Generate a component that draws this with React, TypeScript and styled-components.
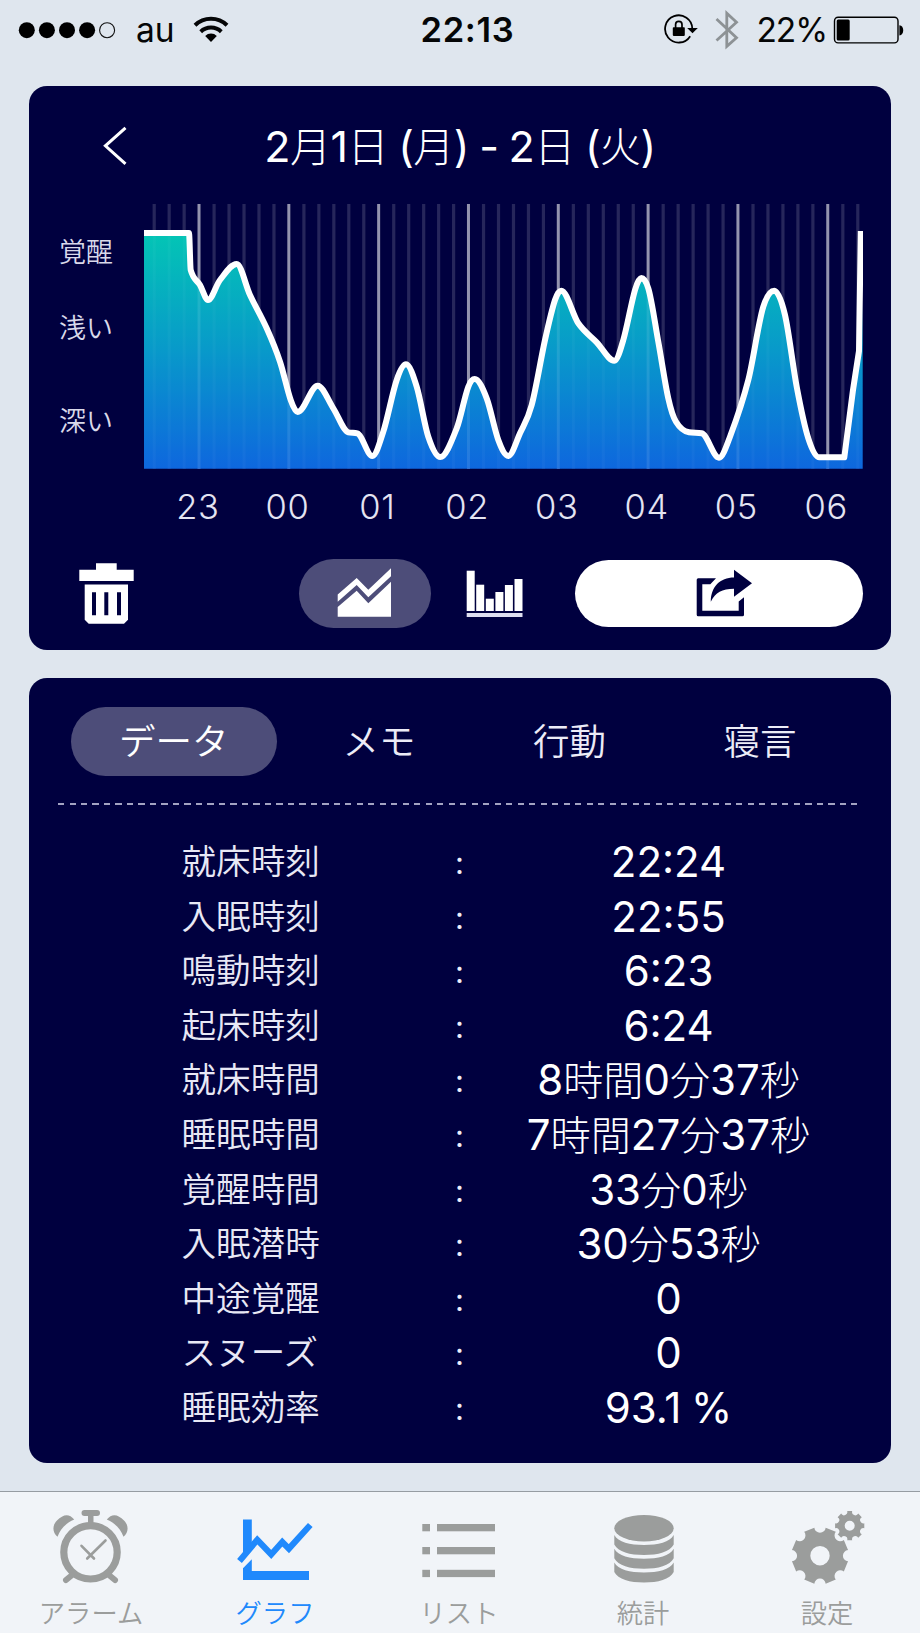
import React from 'react';
import styled, { createGlobalStyle } from 'styled-components';

const NAVY = '#00003f';
const PILL = '#4d4d79';
const GREY = '#9b9d9c';
const BLUE = '#2089fc';

const GlobalStyle = createGlobalStyle`
  *, *::before, *::after { box-sizing: border-box; }
  body {
    margin: 0;
    background: #dfe6ee;
    font-family: Inter, "Noto Sans CJK JP", sans-serif;
    font-weight: 350;
  }
  button { font: inherit; color: inherit; border: 0; padding: 0; background: none; }
  svg { display: block; flex: none; }
`;

const Screen = styled.div`
  width: 920px;
  height: 1633px;
  display: flex;
  flex-direction: column;
  overflow: hidden;
`;

/* ---------- status bar ---------- */

const StatusBar = styled.header`
  height: 58px;
  flex: none;
  display: grid;
  grid-template-columns: 1fr auto 1fr;
  align-items: center;
  padding: 0 15px 0 18px;
  color: #050607;
  font-size: 33.5px;
  font-weight: 400;
  line-height: 58px;
`;

const StatusGroup = styled.div<{ $end?: boolean }>`
  display: flex;
  align-items: center;
  justify-content: ${p => (p.$end ? 'flex-end' : 'flex-start')};
`;

const Carrier = styled.span`
  width: 57px;
  margin-left: 20px;
  padding-top: 1px;
`;

const Clock = styled.span`
  font-weight: 600;
  font-size: 34.5px;
  letter-spacing: 0.7px;
  margin-left: 12px;
  padding-top: 1px;
`;

const Percent = styled.span`
  margin: 0 6px 0 18px;
  padding-top: 1px;
  letter-spacing: -1.1px;
`;

/* ---------- cards ---------- */

const Card = styled.section<{ $height: number; $gap: number }>`
  flex: none;
  height: ${p => p.$height}px;
  margin: ${p => p.$gap}px 29px 0;
  border-radius: 18px;
  background: ${NAVY};
  color: #fff;
  display: flex;
  flex-direction: column;
`;

const CardHeader = styled.div`
  height: 117.5px;
  flex: none;
  display: grid;
  grid-template-columns: 1fr auto 1fr;
  align-items: center;
  padding: 1px 74px 0;
`;

const Title = styled.h1`
  margin: 0;
  padding-top: 2px;
  font-size: 43px;
  line-height: 60px;
  font-weight: 300;
  white-space: nowrap;
  letter-spacing: -0.5px;
  word-spacing: -1.5px;
`;

const ChartRow = styled.div`
  display: flex;
  padding-left: 30px;
`;

const DepthLabels = styled.div`
  width: 85px;
  padding-top: 34px;
  font-size: 27px;
  line-height: 30px;
  color: #d9d9ea;
`;

const DepthLabel = styled.div<{ $gap?: number }>`
  margin-top: ${p => p.$gap ?? 0}px;
`;

const Hours = styled.div`
  display: grid;
  grid-template-columns: repeat(8, 89.75px);
  margin-left: 124px;
  margin-top: 16px;
  height: 44px;
  font-size: 34.5px;
  line-height: 44px;
  letter-spacing: 0.7px;
  text-align: center;
  color: #e4e4f2;
`;

const Toolbar = styled.div`
  display: flex;
  align-items: center;
  height: 69px;
  margin-top: 30px;
  padding-left: 50px;
`;

const ModeButton = styled.button<{ $active?: boolean; $shift?: number }>`
  width: 132px;
  height: 69px;
  border-radius: 35px;
  display: flex;
  align-items: center;
  justify-content: center;
  padding-right: ${p => p.$shift ?? 0}px;
  background: ${p => (p.$active ? PILL : 'transparent')};
`;

const ModeSwitch = styled.div`
  display: flex;
  margin-left: 165px;
`;

const ShareButton = styled.button`
  width: 288px;
  height: 67px;
  margin-left: 12px;
  border-radius: 34px;
  background: #fff;
  display: flex;
  align-items: center;
  justify-content: center;
  padding-left: 11px;
`;

const Tabs = styled.nav`
  display: flex;
  height: 69px;
  margin: 28.5px 0 0 41.5px;
`;

const TabButton = styled.button<{ $active?: boolean; $width: number }>`
  width: ${p => p.$width}px;
  border-radius: 35px;
  font-size: 36.5px;
  line-height: 66px;
  padding-top: 2px;
  color: ${p => (p.$active ? '#fff' : '#ececf7')};
  background: ${p => (p.$active ? PILL : 'transparent')};
`;

const Divider = styled.div`
  height: 1.5px;
  flex: none;
  margin: 27.5px 34px 0 28.5px;
  background: repeating-linear-gradient(90deg, #a3a3c2 0 6px, transparent 6px 11.5px);
`;

const Records = styled.dl`
  margin: 28px 0 0;
  padding-left: 152.5px;
`;

const Record = styled.div`
  display: grid;
  grid-template-columns: 258px 40px 300px;
  height: 54.6px;
  line-height: 54.6px;
`;

const RecordName = styled.dt`
  padding-top: 1px;
  font-size: 34.6px;
  color: #e8e8f5;
`;

const Colon = styled.span`
  font-size: 31px;
  font-weight: 400;
  padding-top: 3px;
  text-align: center;
  color: #eeeef8;
`;

const RecordValue = styled.dd`
  margin: 0 -79px 0 39px;
  padding-top: 2px;
  width: 300px;
  font-size: 42px;
  font-weight: 300;
  text-align: center;
  white-space: nowrap;
  word-spacing: -2px;
`;

const Figure = styled.span`
  font-weight: 400;
`;

const Kanji = styled.span`
  font-size: 0.955em;
`;

// Figures are set a little heavier and larger than the characters between them.
const MixedText = ({ children }: { children: string }) => (
  <>
    {(children.match(/[\x20-\x7e]+|[^\x20-\x7e]+/g) ?? []).map((run, i) =>
      run.charCodeAt(0) < 128 ? <Figure key={i}>{run}</Figure> : <Kanji key={i}>{run}</Kanji>,
    )}
  </>
);

/* ---------- bottom navigation ---------- */

const BottomNav = styled.nav`
  height: 142px;
  flex: none;
  margin-top: auto;
  display: grid;
  grid-template-columns: repeat(5, 1fr);
  border-top: 1px solid #969ca2;
  background: #f1f4f8;
`;

const NavItem = styled.button<{ $active?: boolean }>`
  display: flex;
  flex-direction: column;
  color: ${p => (p.$active ? BLUE : GREY)};
`;

const NavLabel = styled.span`
  width: 182px;
  margin-top: 11.5px;
  font-size: 26.3px;
  line-height: 36px;
  text-align: center;
`;

/* ---------- sleep chart ---------- */

const DEPTH: [number, number][] = [
  [0, 29], [45, 29], [46.7, 66], [56, 81], [64, 96], [76, 76], [92.7, 60], [106, 91],
  [122.7, 124.3], [136, 157.7], [146.7, 196], [153.7, 208], [173.7, 181.7], [189.3, 204.3],
  [204.3, 228.3], [213.3, 229.3], [228.3, 252], [239.3, 227.7], [252.7, 176], [262, 160.3],
  [272.7, 182.7], [284.3, 232.7], [296.3, 253], [312.7, 224.3], [324.3, 182.7], [330.7, 175],
  [342.7, 194.3], [354.3, 236], [364.3, 252], [376, 229.3], [387.7, 201], [401, 136],
  [411, 96], [417.3, 86.7], [434.3, 119.3], [452.7, 138.3], [470.3, 156.7], [479.3, 136],
  [491, 86], [497.3, 74], [504.3, 84.3], [514.3, 137.7], [524.3, 194.3], [532, 217.7],
  [545, 228.3], [557.7, 229.3], [575, 253.7], [586, 232.7], [604.3, 176], [619.3, 102.7],
  [630.3, 86.7], [641, 111], [652.7, 182.7], [664.3, 234.3], [675.3, 253.3], [700.3, 253.3],
];

// Monotone cubic interpolation keeps peaks and valleys at the sampled points.
function smoothPath(pts: [number, number][]): string {
  const n = pts.length;
  const slope = pts.slice(1).map(([x, y], i) => (y - pts[i][1]) / (x - pts[i][0]));
  const tangent = pts.map((_, i) => {
    if (i === 0) return slope[0];
    if (i === n - 1) return slope[n - 2];
    const a = slope[i - 1];
    const b = slope[i];
    if (a * b <= 0) return 0;
    const mean = (pts[i + 1][1] - pts[i - 1][1]) / (pts[i + 1][0] - pts[i - 1][0]);
    return Math.sign(a) * Math.min(Math.abs(mean), 2.2 * Math.abs(a), 2.2 * Math.abs(b));
  });
  let d = `M${pts[0][0]} ${pts[0][1]}`;
  for (let i = 0; i < n - 1; i++) {
    const [x0, y0] = pts[i];
    const [x1, y1] = pts[i + 1];
    const h = (x1 - x0) / 3;
    d += `C${x0 + h} ${y0 + tangent[i] * h} ${x1 - h} ${y1 - tangent[i + 1] * h} ${x1} ${y1}`;
  }
  return d;
}

const CURVE = `${smoothPath(DEPTH)}L709 186L715 147L716.8 27`;
const AREA = `${CURVE}L718.7 140V264.7H0Z`;

const Grid = ({ minor, major }: { minor: number; major: number }) => (
  <g fill="#fff">
    {Array.from({ length: 48 }, (_, i) => {
      const isHour = i % 6 === 3;
      return (
        <rect
          key={i}
          x={8.6 + i * 14.97}
          y={0}
          width={isHour ? 3 : 3.2}
          height={264.7}
          opacity={isHour ? major : minor}
        />
      );
    })}
  </g>
);

const SleepChart = () => (
  <svg width="719" height="265" viewBox="0 0 719 265">
    <defs>
      <linearGradient id="sleep" gradientUnits="userSpaceOnUse" x1="0" y1="29" x2="0" y2="265">
        <stop offset="0" stopColor="#03c5b5" />
        <stop offset="0.5" stopColor="#0899ca" />
        <stop offset="1" stopColor="#0e67de" />
      </linearGradient>
      <clipPath id="area"><path d={AREA} /></clipPath>
    </defs>
    <Grid minor={0.15} major={0.58} />
    <path d={AREA} fill="url(#sleep)" />
    <g clipPath="url(#area)"><Grid minor={0.03} major={0.1} /></g>
    <path d={CURVE} fill="none" stroke="#fff" strokeWidth="6" strokeLinejoin="round" />
  </svg>
);

/* ---------- icons ---------- */

const SignalIcon = () => (
  <svg width="98" height="18" viewBox="0 0 98 18">
    {[8.8, 28.9, 49, 69.1].map(x => <circle key={x} cx={x} cy="9.2" r="8" fill="#000" />)}
    <circle cx="89.1" cy="9.2" r="7.5" fill="none" stroke="#111" strokeWidth="1.1" />
  </svg>
);

const WifiIcon = () => (
  <svg width="36" height="28" viewBox="0 0 36 28">
    <g fill="none" stroke="#050607" strokeWidth="4">
      <path d="M2 9.2A23 23 0 0 1 34 9.2" />
      <path d="M7.7 15.7A15 15 0 0 1 28.3 15.7" />
    </g>
    <path d="M12.2 19.9A8.5 8.5 0 0 1 23.8 19.9L18 26.1Z" />
  </svg>
);

const RotationLockIcon = () => (
  <svg width="36" height="32" viewBox="0 0 36 32">
    <path d="M28.3 14.7A13.6 13.6 0 1 0 26.2 22.2" fill="none" stroke="#000" strokeWidth="1.8" />
    <path d="M23.2 14H33.8L28.5 19.2Z" />
    <rect x="8.8" y="13.3" width="12" height="8.6" rx="0.8" />
    <path d="M11.6 14V10.5a3.2 3.2 0 0 1 6.4 0V14" fill="none" stroke="#000" strokeWidth="1.7" />
  </svg>
);

const BluetoothIcon = () => (
  <svg width="24" height="40" viewBox="0 0 24 40">
    <path d="M1.5 9L21.5 27.8L11.8 36.3V3.3L21.5 12.2L1.5 30.5" fill="none" stroke="#8d9295" strokeWidth="2.8" />
  </svg>
);

const BatteryIcon = () => (
  <svg width="72" height="28" viewBox="0 0 72 28">
    <rect x="1.5" y="1.3" width="63.5" height="25.6" rx="3.6" fill="none" stroke="#000" strokeWidth="1.4" />
    <rect x="3.7" y="3.6" width="13" height="21" rx="1.5" />
    <path d="M66.4 9.2C71.5 9.2 71.5 19.4 66.4 19.4Z" />
  </svg>
);

const BackIcon = () => (
  <svg width="26" height="40" viewBox="0 0 26 40">
    <path d="M22.5 1.8L2.4 19.8L22.5 37.8" fill="none" stroke="#fff" strokeWidth="3" />
  </svg>
);

const TrashIcon = () => (
  <svg width="55" height="61" viewBox="0 0 55 61" fill="#fff">
    <path d="M17 .3H37.7V6.7H54.7V18H.3V6.7H17Z" />
    <path
      fillRule="evenodd"
      d="M5.7 21.5H49V56.8L45 60.8H9.7L5.7 56.8ZM13 29.3V52.3H17V29.3ZM25.3 29.3V52.3H29.3V29.3ZM38 29.3V52.3H42V29.3Z"
    />
  </svg>
);

const AreaIcon = () => (
  <svg width="55" height="50" viewBox="0 0 55 50" fill="#fff">
    <path d="M.7 26.5L19.7 10L31.3 21.8L54 .2V8.2L31.3 29.3L19.7 17L.7 33.7Z" />
    <path d="M.7 39L19.7 22.8L31.3 35.3L54 13.7V48.7H.7Z" />
  </svg>
);

const BARS: [number, number][] = [[0.7, 0.7], [10.2, 14.7], [19.8, 28.7], [29.4, 22], [38.9, 15], [48.5, 9]];

const BarsIcon = () => (
  <svg width="57" height="47" viewBox="0 0 57 47" fill="#fff">
    {BARS.map(([x, y]) => <rect key={x} x={x} y={y} width="8" height={41 - y} />)}
    <rect x="0.7" y="43" width="55.8" height="4" fill="#dedef0" />
  </svg>
);

const ShareIcon = () => (
  <svg width="57" height="49" viewBox="0 0 57 49" fill={NAVY}>
    <path d="M20 9.3L14.3 15.3H6.3V41.7H42.7V32.5L48 28.3V45.8Q48 47.3 46.5 47.3H2.2Q.7 47.3 .7 45.8V10.8Q.7 9.3 2.2 9.3Z" />
    <path d="M38 .8L56 14.3L38 27.8V19.8C26 19.8 19.5 23.5 14.8 32.7C14.8 18 24 8.6 38 8.6Z" />
  </svg>
);

const NavIcon = styled.svg.attrs({ width: 184, height: 92, viewBox: '0 0 184 92' })`
  fill: currentColor;
`;

const AlarmIcon = () => (
  <NavIcon>
    <circle cx="90.5" cy="60.3" r="26.7" fill="none" stroke="currentColor" strokeWidth="7.2" />
    <path d="M84.5 18H97a2.7 2.7 0 0 1 0 6H93.5V33H88V24H84.5a3 3 0 0 1 0-6Z" />
    <path d="M57.5 44.8C52.3 40 52 33.5 57 28.5C63 22.3 69 21 74.2 27.5C66.5 31 60.5 36.5 57.5 44.8Z" />
    <path d="M123.5 44.8C128.7 40 129 33.5 124 28.5C118 22.3 112 21 106.8 27.5C114.5 31 120.5 36.5 123.5 44.8Z" />
    <g fill="none" stroke="currentColor" strokeLinecap="round">
      <path d="M71.5 83.5L66 88M109.500 83.5L115 88" strokeWidth="6" />
      <path d="M81.5 53.8L94 66.5M87.2 66.5L105.5 48.5" strokeWidth="2.6" />
    </g>
  </NavIcon>
);

const GraphIcon = () => (
  <NavIcon>
    <path d="M59 27.5H67.8V51L59 61.5Z" />
    <path d="M59 76.3L67.8 67.3V79H125V88H59Z" />
    <path d="M55.5 69L73.3 47.8L87.2 62.5L98.3 50L104.9 56.7L126.3 33" fill="none" stroke="currentColor" strokeWidth="6.2" />
  </NavIcon>
);

const ListIcon = () => (
  <NavIcon>
    {[32, 55, 77.8].map(y => (
      <g key={y}>
        <rect x="54.3" y={y} width="7.7" height="7.3" />
        <rect x="69" y={y} width="58" height="7.3" />
      </g>
    ))}
  </NavIcon>
);

const DatabaseIcon = () => (
  <NavIcon>
    <ellipse cx="92" cy="36.2" rx="29.7" ry="13.2" />
    {[0, 13.8, 27.6].map(dy => (
      <path
        key={dy}
        transform={`translate(0 ${dy})`}
        d="M62.3 43C66 50 78 53 92 53S118 50 121.7 43V52.5C118 60 106 63 92 63S66 60 62.3 52.5Z"
      />
    ))}
  </NavIcon>
);

// A disc with eight round notches and a hole.
function gearPath(cx: number, cy: number, r: number, notch: number, hole: number, turn: number): string {
  const half = 2 * Math.asin(notch / (2 * r));
  const at = (a: number) => `${(cx + r * Math.cos(a)).toFixed(2)} ${(cy + r * Math.sin(a)).toFixed(2)}`;
  let d = '';
  for (let i = 0; i < 8; i++) {
    const a = turn + (i * Math.PI) / 4;
    d += `${i ? 'L' : 'M'}${at(a - half)}A${notch} ${notch} 0 0 0 ${at(a + half)}`;
  }
  return `${d}ZM${cx - hole} ${cy}a${hole} ${hole} 0 1 0 ${hole * 2} 0a${hole} ${hole} 0 1 0 ${-hole * 2} 0Z`;
}

const GearsIcon = () => (
  <NavIcon fillRule="evenodd">
    <path d={gearPath(84, 63.7, 28.6, 5.7, 9.7, 0)} />
    <path d={gearPath(113.7, 33.7, 14.8, 3.3, 5, Math.PI / 8)} />
  </NavIcon>
);

/* ---------- content ---------- */

const HOURS = ['23', '00', '01', '02', '03', '04', '05', '06'];

const RECORDS: [string, string][] = [
  ['就床時刻', '22:24'],
  ['入眠時刻', '22:55'],
  ['鳴動時刻', '6:23'],
  ['起床時刻', '6:24'],
  ['就床時間', '8時間0分37秒'],
  ['睡眠時間', '7時間27分37秒'],
  ['覚醒時間', '33分0秒'],
  ['入眠潜時', '30分53秒'],
  ['中途覚醒', '0'],
  ['スヌーズ', '0'],
  ['睡眠効率', '93.1 %'],
];

const NAV = [
  { label: 'アラーム', Icon: AlarmIcon },
  { label: 'グラフ', Icon: GraphIcon },
  { label: 'リスト', Icon: ListIcon },
  { label: '統計', Icon: DatabaseIcon },
  { label: '設定', Icon: GearsIcon },
];

const BluetoothSlot = styled.span`
  margin-left: 15px;
`;

export default function App() {
  return (
    <>
      <GlobalStyle />
      <Screen>
        <StatusBar>
          <StatusGroup>
            <SignalIcon />
            <Carrier>au</Carrier>
            <WifiIcon />
          </StatusGroup>
          <Clock>22:13</Clock>
          <StatusGroup $end>
            <RotationLockIcon />
            <BluetoothSlot><BluetoothIcon /></BluetoothSlot>
            <Percent>22%</Percent>
            <BatteryIcon />
          </StatusGroup>
        </StatusBar>

        <Card $height={563.2} $gap={28.4}>
          <CardHeader>
            <BackIcon />
            <Title><MixedText>2月1日 (月) - 2日 (火)</MixedText></Title>
          </CardHeader>
          <ChartRow>
            <DepthLabels>
              <DepthLabel>覚醒</DepthLabel>
              <DepthLabel $gap={46}>浅い</DepthLabel>
              <DepthLabel $gap={63}>深い</DepthLabel>
            </DepthLabels>
            <SleepChart />
          </ChartRow>
          <Hours>
            {HOURS.map(h => <span key={h}>{h}</span>)}
          </Hours>
          <Toolbar>
            <TrashIcon />
            <ModeSwitch>
              <ModeButton $active $shift={2}><AreaIcon /></ModeButton>
              <ModeButton $shift={6}><BarsIcon /></ModeButton>
            </ModeSwitch>
            <ShareButton><ShareIcon /></ShareButton>
          </Toolbar>
        </Card>

        <Card $height={785} $gap={28.9}>
          <Tabs>
            <TabButton $active $width={206.5}>データ</TabButton>
            <TabButton $width={204}>メモ</TabButton>
            <TabButton $width={177}>行動</TabButton>
            <TabButton $width={204}>寝言</TabButton>
          </Tabs>
          <Divider />
          <Records>
            {RECORDS.map(([name, value]) => (
              <Record key={name}>
                <RecordName>{name}</RecordName>
                <Colon>:</Colon>
                <RecordValue><MixedText>{value}</MixedText></RecordValue>
              </Record>
            ))}
          </Records>
        </Card>

        <BottomNav>
          {NAV.map(({ label, Icon }, i) => (
            <NavItem key={label} $active={i === 1}>
              <Icon />
              <NavLabel>{label}</NavLabel>
            </NavItem>
          ))}
        </BottomNav>
      </Screen>
    </>
  );
}
